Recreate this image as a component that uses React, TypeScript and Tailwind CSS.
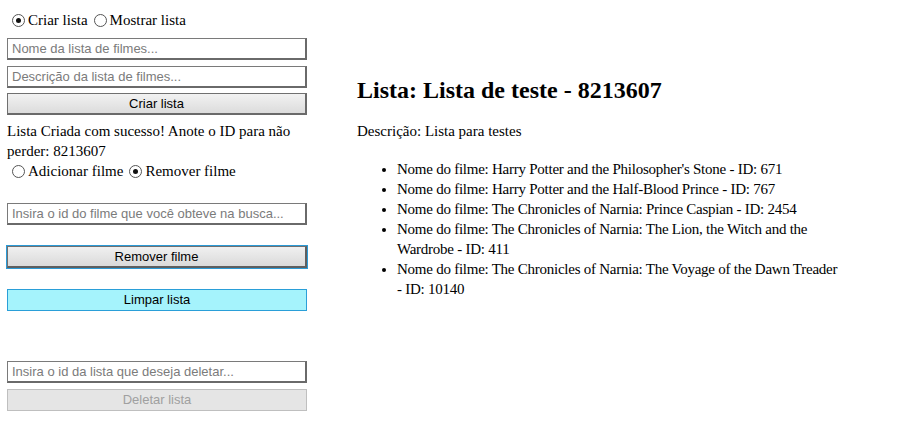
import type React from "react"

const movies = [
  "Nome do filme: Harry Potter and the Philosopher's Stone - ID: 671",
  "Nome do filme: Harry Potter and the Half-Blood Prince - ID: 767",
  "Nome do filme: The Chronicles of Narnia: Prince Caspian - ID: 2454",
  "Nome do filme: The Chronicles of Narnia: The Lion, the Witch and the Wardrobe - ID: 411",
  "Nome do filme: The Chronicles of Narnia: The Voyage of the Dawn Treader - ID: 10140",
]

function Radio({ checked, label }: { checked?: boolean; label: string }) {
  return (
    <label className="inline-flex items-center mr-[6px]">
      <span className="w-[13px] h-[13px] rounded-full border border-[#555] bg-white flex items-center justify-center mr-[3px]">
        {checked && <span className="w-[5px] h-[5px] rounded-full bg-[#111]" />}
      </span>
      {label}
    </label>
  )
}

function Field({ placeholder }: { placeholder: string }) {
  return (
    <input
      placeholder={placeholder}
      className="block w-[300px] h-[22px] px-[4px] text-[13px] font-['Liberation_Sans',Arial,sans-serif] border border-[#7a7a7a] border-r-2 border-b-2 border-r-[#6a6a6a] border-b-[#6a6a6a] bg-white outline-none placeholder:text-[#7b7b7b]"
    />
  )
}

function Btn({ children, className }: { children: React.ReactNode; className?: string }) {
  return (
    <button
      className={
        "block w-[300px] h-[22px] text-[13px] text-black font-['Liberation_Sans',Arial,sans-serif] " +
        (className ?? "")
      }
    >
      {children}
    </button>
  )
}

export default function App() {
  return (
    <div className="min-h-[424px] bg-white text-black text-[15px] font-['Liberation_Serif','Times_New_Roman',serif] flex items-start">
      {/* Painel de controle */}
      <div className="w-[300px] ml-[7px] shrink-0">
        <div className="flex items-center h-[18px] mt-[11px] ml-[5px]">
          <Radio checked label="Criar lista" />
          <Radio label="Mostrar lista" />
        </div>
        <div className="mt-[9px]">
          <Field placeholder="Nome da lista de filmes..." />
        </div>
        <div className="mt-[6px]">
          <Field placeholder="Descrição da lista de filmes..." />
        </div>
        <Btn className="mt-[5px] bg-gradient-to-b from-[#f2f2f2] to-[#dcdcdc] border border-[#707070] border-r-2 border-b-2 border-r-[#6a6a6a] border-b-[#6a6a6a]">
          Criar lista
        </Btn>
        <p className="mt-[6px] leading-[20px]">Lista Criada com sucesso! Anote o ID para não perder: 8213607</p>
        <div className="flex items-center h-[20px] ml-[5px]">
          <Radio label="Adicionar filme" />
          <Radio checked label="Remover filme" />
        </div>
        <div className="mt-[22px]">
          <Field placeholder="Insira o id do filme que você obteve na busca..." />
        </div>
        <Btn className="mt-[21px] bg-gradient-to-b from-[#f0f0f0] to-[#dadada] border border-[#707070] border-r-2 border-b-2 border-r-[#5f5f5f] border-b-[#5f5f5f] outline outline-1 outline-[#2b9ad6]">
          Remover filme
        </Btn>
        <Btn className="mt-[21px] bg-[#a5f3fc] border border-[#2a9fd8]">Limpar lista</Btn>
        <div className="mt-[50px]">
          <Field placeholder="Insira o id da lista que deseja deletar..." />
        </div>
        <Btn className="mt-[6px] bg-[#e5e5e5] border border-[#bfbfbf] text-[#a0a0a0]!">Deletar lista</Btn>
      </div>

      {/* Lista exibida */}
      <div className="w-[485px] ml-[50px] pt-[76px]">
        <h2 className="text-[24px] font-bold leading-[28px]">Lista: Lista de teste - 8213607</h2>
        <p className="mt-[17px] leading-[20px]">Descrição: Lista para testes</p>
        <ul className="list-disc pl-[40px] mt-[18px] leading-[20px] tracking-[-0.25px]">
          {movies.map((m) => (
            <li key={m}>{m}</li>
          ))}
        </ul>
      </div>
    </div>
  )
}
